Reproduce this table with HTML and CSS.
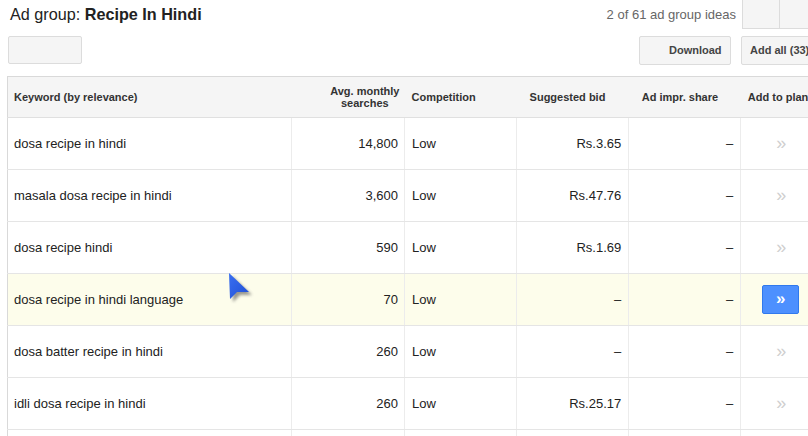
FILE: index.html
```html
<!DOCTYPE html>
<html>
<head>
<meta charset="utf-8">
<link rel="stylesheet" href="styles.css">
</head>
<body>
<div class="page">
  <div class="topbar">
    <h1 class="title">Ad group: <b>Recipe In Hindi</b></h1>
    <div class="pager">
      <span class="pager-text">2 of 61 ad group ideas</span>
      <div class="pager-btns"><span class="pbtn"></span><span class="pbtn"></span></div>
    </div>
  </div>
  <div class="toolbar">
    <span class="btn btn-blank"></span>
    <div class="toolbar-right">
      <span class="btn btn-download">Download</span>
      <span class="btn btn-addall">Add all (33)</span>
    </div>
  </div>
  <table class="grid">
    <thead>
      <tr>
        <th class="c-kw">Keyword (by relevance)</th>
        <th class="c-avg"><span class="avg-label">Avg. monthly<br>searches</span></th>
        <th class="c-comp">Competition</th>
        <th class="c-bid">Suggested bid</th>
        <th class="c-impr">Ad impr. share</th>
        <th class="c-plan">Add to plan</th>
      </tr>
    </thead>
    <tbody>
      <tr><td class="c-kw">dosa recipe in hindi</td><td class="num">14,800</td><td class="c-comp">Low</td><td class="num">Rs.3.65</td><td class="num">–</td><td class="c-plan"><span class="chev">»</span></td></tr>
      <tr><td class="c-kw">masala dosa recipe in hindi</td><td class="num">3,600</td><td class="c-comp">Low</td><td class="num">Rs.47.76</td><td class="num">–</td><td class="c-plan"><span class="chev">»</span></td></tr>
      <tr><td class="c-kw">dosa recipe hindi</td><td class="num">590</td><td class="c-comp">Low</td><td class="num">Rs.1.69</td><td class="num">–</td><td class="c-plan"><span class="chev">»</span></td></tr>
      <tr class="hl"><td class="c-kw">dosa recipe in hindi language</td><td class="num">70</td><td class="c-comp">Low</td><td class="num">–</td><td class="num">–</td><td class="c-plan"><span class="add-btn">»</span></td></tr>
      <tr><td class="c-kw">dosa batter recipe in hindi</td><td class="num">260</td><td class="c-comp">Low</td><td class="num">–</td><td class="num">–</td><td class="c-plan"><span class="chev">»</span></td></tr>
      <tr><td class="c-kw">idli dosa recipe in hindi</td><td class="num">260</td><td class="c-comp">Low</td><td class="num">Rs.25.17</td><td class="num">–</td><td class="c-plan"><span class="chev">»</span></td></tr>
      <tr><td class="c-kw"></td><td class="num"></td><td class="c-comp"></td><td class="num"></td><td class="num"></td><td class="c-plan"></td></tr>
    </tbody>
  </table>
  <svg class="cursor" width="30" height="34" viewBox="0 0 30 34">
    <defs>
      <linearGradient id="cg" x1="0" y1="0" x2="1" y2="1">
        <stop offset="0" stop-color="#3a6ff0"/>
        <stop offset="1" stop-color="#1f4fd6"/>
      </linearGradient>
      <filter id="sh" x="-30%" y="-30%" width="180%" height="180%">
        <feGaussianBlur stdDeviation="1.4"/>
      </filter>
    </defs>
    <polygon points="3,3 4,29 11,22 23,22" fill="#555" opacity="0.6" filter="url(#sh)"/>
    <polygon points="0,0 1,26 8,19 20,19" fill="url(#cg)"/>
  </svg>
</div>
</body>
</html>
```

FILE: styles.css
```css
html, body {
  margin: 0;
  padding: 0;
  background: #fff;
  overflow: hidden;
}
body {
  font-family: "Liberation Sans", Arial, sans-serif;
  color: #222;
  width: 808px;
  height: 436px;
}
.page {
  position: relative;
  width: 808px;
  height: 436px;
  overflow: hidden;
}
.topbar {
  display: flex;
  justify-content: space-between;
  align-items: flex-start;
  height: 28px;
}
.title {
  margin: 0;
  padding: 4px 0 0 10px;
  font-size: 16.2px;
  font-weight: normal;
  line-height: 20px;
  color: #222;
}
.title b {
  font-weight: bold;
  color: #222;
}
.pager {
  display: flex;
  align-items: flex-start;
  flex-shrink: 0;
  margin-right: -13px;
}
.pager-text {
  font-size: 13px;
  color: #666;
  line-height: 16px;
  padding-top: 7px;
  margin-right: 6px;
}
.pager-btns {
  display: flex;
  margin-top: -1px;
}
.pbtn {
  display: block;
  width: 36px;
  height: 28px;
  background: #f5f5f5;
  border: 1px solid #dcdcdc;
}
.pbtn + .pbtn {
  border-left: none;
  width: 40px;
}
.toolbar {
  display: flex;
  justify-content: space-between;
  margin-top: 8px;
  padding-left: 8px;
  height: 29px;
}
.toolbar-right {
  display: flex;
  gap: 10px;
  margin-right: -20px;
}
.btn {
  display: block;
  box-sizing: border-box;
  height: 29px;
  background: #f5f5f5;
  border: 1px solid #dcdcdc;
  border-radius: 2px;
  font-size: 11px;
  font-weight: bold;
  color: #444;
  line-height: 27px;
}
.btn-blank {
  width: 74px;
  height: 28px;
}
.btn-download {
  width: 92px;
  padding-left: 29px;
}
.btn-addall {
  width: 87px;
  padding-left: 8px;
  white-space: nowrap;
}
.grid {
  margin-top: 11px;
  margin-left: 7px;
  width: 815px;
  border-collapse: collapse;
  table-layout: fixed;
  font-size: 13px;
  color: #222;
}
.grid th {
  background: #f5f5f5;
  border-top: 1px solid #d9d9d9;
  border-bottom: 1px solid #e0e0e0;
  height: 40px;
  padding: 0;
  font-size: 11px;
  font-weight: bold;
  color: #333;
  text-align: left;
  line-height: 12px;
  vertical-align: middle;
}
.grid th:first-child,
.grid td:first-child {
  border-left: 1px solid #d9d9d9;
}
.grid td {
  height: 51px;
  padding: 0;
  border-bottom: 1px solid #e5e5e5;
  border-left: 1px solid #ececec;
  vertical-align: middle;
  white-space: nowrap;
}
.grid th.c-kw { width: 277px; padding-left: 6px; }
.grid td.c-kw { padding-left: 6px; }
.grid th.c-avg { width: 108px; text-align: right; padding-right: 5px; }
.avg-label { display: inline-block; text-align: center; }
.grid th.c-comp { width: 105px; padding-left: 7px; }
.grid td.c-comp { padding-left: 7px; }
.grid th.c-bid { width: 99px; padding-left: 13px; }
.grid th.c-impr { width: 99px; padding-left: 13px; }
.grid th.c-plan { width: 74px; padding-left: 7px; white-space: nowrap; }
.grid td.num { text-align: right; padding-right: 7px; }
.grid td:nth-child(2) { padding-right: 6px; }
.grid td.c-plan { text-align: left; padding-left: 35px; }
.chev {
  color: #cfcfcf;
  font-size: 18px;
}
.grid tr.hl td { background: #fdfdeb; }
.grid tr.hl td.c-plan { padding-left: 21px; }
.add-btn {
  display: block;
  box-sizing: border-box;
  width: 37px;
  height: 29px;
  background: #4d90fe;
  border: 1px solid #3079ed;
  border-radius: 2px;
  color: #fff;
  font-weight: bold;
  font-size: 17px;
  line-height: 25px;
  text-align: center;
}
.cursor {
  position: absolute;
  left: 229px;
  top: 273px;
}
```
